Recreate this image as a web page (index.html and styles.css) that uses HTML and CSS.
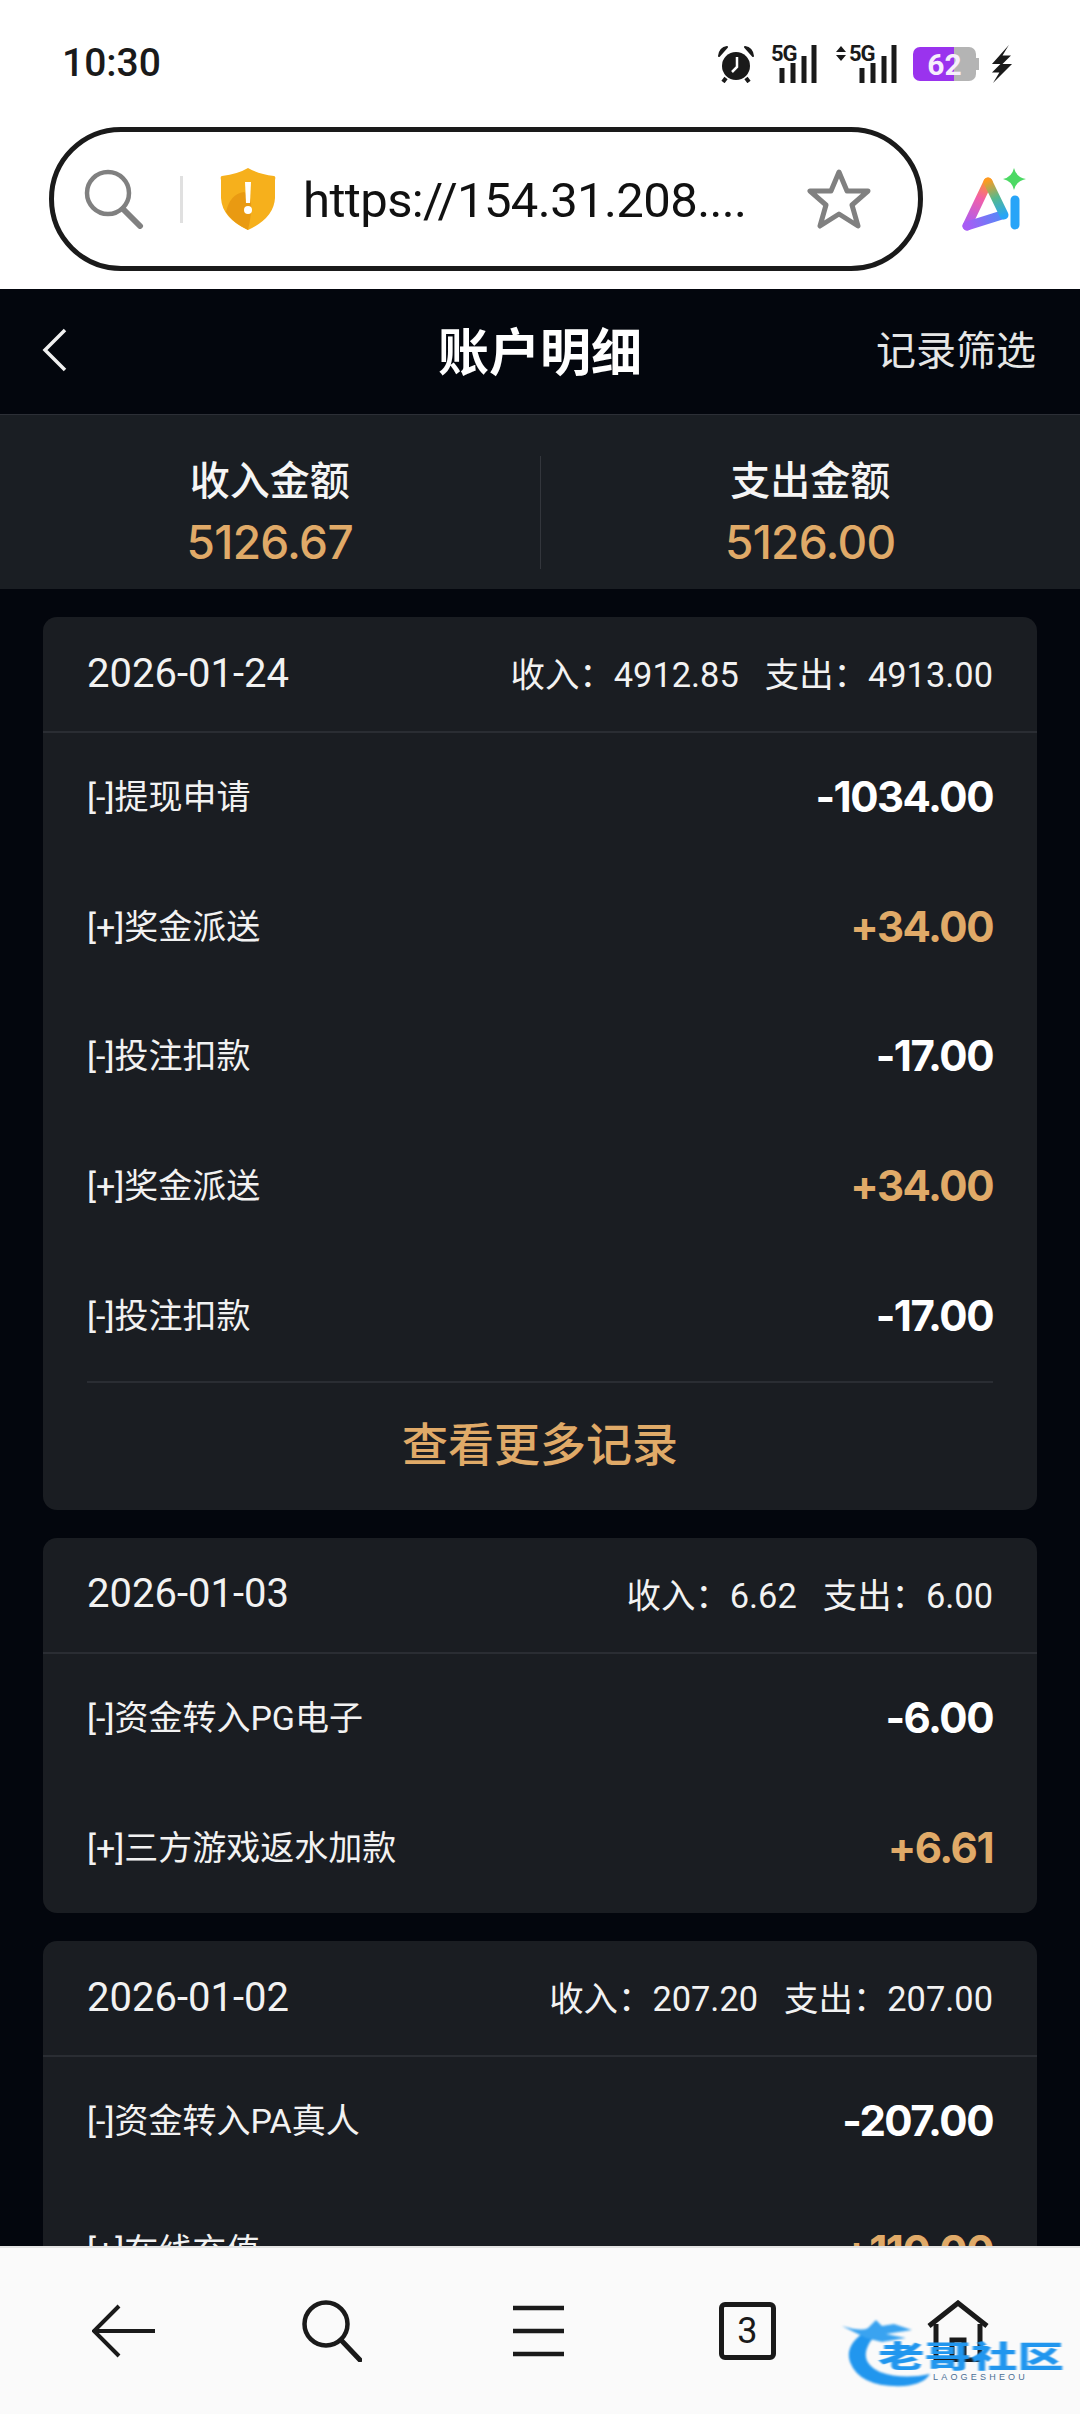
FILE: index.html
```html
<!DOCTYPE html>
<html lang="en">
<head>
    <meta charset="utf-8">
    <title>账户明细</title>
    <link rel="stylesheet" href="styles.css">
</head>
<body>
<div class="status-bar">
    <span class="status-time">10:30</span>
    <div class="status-icons">
        <svg class="icon-alarm" width="38" height="38" viewBox="0 0 38 38">
            <circle cx="19" cy="21" r="14" fill="#1a1a1a"/>
            <path d="M2 11 Q3 3 10 2 Z M36 11 Q35 3 28 2 Z" fill="#1a1a1a" stroke="#1a1a1a" stroke-width="2" stroke-linejoin="round"/>
            <path d="M9 33 L6 37 M29 33 L32 37" stroke="#1a1a1a" stroke-width="4"/>
            <path d="M20 12 V22 L15 27" fill="none" stroke="#fff" stroke-width="2.5"/>
        </svg>
        <div class="signal signal-first">
            <span class="signal-tag">5G</span>
            <svg width="46" height="38" viewBox="0 0 46 38">
                <path d="M11 38 V23 M22 38 V18 M33 38 V11 M43 38 V0" stroke="#1a1a1a" stroke-width="5"/>
            </svg>
        </div>
        <div class="signal signal-wide">
            <svg class="signal-arrows" width="10" height="15" viewBox="0 0 10 15">
                <path d="M0 6 L5 0 L10 6 Z M0 9 L5 15 L10 9 Z" fill="#1a1a1a"/>
            </svg>
            <span class="signal-tag">5G</span>
            <svg width="46" height="38" viewBox="0 0 46 38">
                <path d="M11 38 V23 M22 38 V18 M33 38 V11 M43 38 V0" stroke="#1a1a1a" stroke-width="5"/>
            </svg>
        </div>
        <div class="battery">
            <div class="battery-body"><span class="battery-level">62</span></div>
            <div class="battery-nub"></div>
        </div>
        <svg class="icon-bolt" width="22" height="38" viewBox="2 0 19 36">
            <path d="M18 0 L2 18 L10 18 L2 26 L9 26 L3 36 L21 18 L12 18 L20 10 L12 10 Z" fill="#1a1a1a"/>
        </svg>
    </div>
</div>

<div class="browser-bar">
    <div class="address-pill">
        <svg width="60" height="60" viewBox="0 0 60 60">
            <circle cx="24" cy="24" r="21" fill="none" stroke="#808080" stroke-width="4.5"/>
            <path d="M39 40 L56 57" stroke="#808080" stroke-width="6" stroke-linecap="round"/>
        </svg>
        <div class="address-divider"></div>
        <svg width="56" height="62" viewBox="0 0 56 62">
            <path d="M28 0 Q38 6 54 8 Q56 8 55 12 L55 30 Q54 50 28 62 Q2 50 1 30 L1 12 Q0 8 2 8 Q18 6 28 0 Z" fill="#f6b01c"/>
            <path d="M6 44 Q10 26 24 24 Q36 28 28 62 Q12 54 6 44 Z" fill="#e99a12"/>
            <path d="M25 14 H31 L30 35 H26 Z" fill="#fff"/>
            <circle cx="28" cy="42" r="4" fill="#fff"/>
        </svg>
        <span class="address-url">https://154.31.208....</span>
        <svg class="address-star" width="64" height="60" viewBox="0 0 64 60">
            <path d="M32 3 L40 22 L61 22 L45 36 L51 57 L32 45 L13 57 L19 36 L3 22 L24 22 Z" fill="none" stroke="#808080" stroke-width="5" stroke-linejoin="round"/>
        </svg>
    </div>
    <svg class="ai-logo" width="66" height="64" viewBox="0 0 66 64">
        <defs>
            <linearGradient id="ai-left" gradientUnits="userSpaceOnUse" x1="26" y1="12" x2="6" y2="58">
                <stop offset="0" stop-color="#ff9a1f"/>
                <stop offset="0.4" stop-color="#f25fa8"/>
                <stop offset="1" stop-color="#a85cf5"/>
            </linearGradient>
            <linearGradient id="ai-right" gradientUnits="userSpaceOnUse" x1="26" y1="12" x2="42" y2="48">
                <stop offset="0" stop-color="#ff9a1f"/>
                <stop offset="0.5" stop-color="#55b98e"/>
                <stop offset="1" stop-color="#27a4f8"/>
            </linearGradient>
            <linearGradient id="ai-base" gradientUnits="userSpaceOnUse" x1="5" y1="58" x2="42" y2="46">
                <stop offset="0" stop-color="#a85cf5"/>
                <stop offset="1" stop-color="#4c8cf8"/>
            </linearGradient>
        </defs>
        <path d="M5 58 L26 14" fill="none" stroke="url(#ai-left)" stroke-width="9" stroke-linecap="round"/>
        <path d="M5 58 L40 47" fill="none" stroke="url(#ai-base)" stroke-width="9" stroke-linecap="round"/>
        <path d="M26 14 L42 47" fill="none" stroke="url(#ai-right)" stroke-width="9" stroke-linecap="round"/>
        <path d="M53 32 V57" fill="none" stroke="#27a4f8" stroke-width="9" stroke-linecap="round"/>
        <path d="M52 0 Q54 9 64 11 Q54 13 52 22 Q50 13 41 11 Q50 9 52 0 Z" fill="#4cd964"/>
    </svg>
</div>

<div class="page-header">
    <svg width="26" height="44" viewBox="0 0 26 44">
        <path d="M23 2 L3 22 L23 42" fill="none" stroke="#f0f0f0" stroke-width="3.5"/>
    </svg>
    <h1 class="page-title">账户明细</h1>
    <span class="page-filter">记录筛选</span>
</div>

<div class="summary">
    <div class="summary-item">
        <span class="summary-label">收入金额</span>
        <span class="summary-value">5126.67</span>
    </div>
    <div class="summary-divider"></div>
    <div class="summary-item">
        <span class="summary-label">支出金额</span>
        <span class="summary-value">5126.00</span>
    </div>
</div>

<div class="day-list">
    <section class="day-card">
        <div class="day-head">
            <span class="day-date">2026-01-24</span>
            <div class="day-totals"><span>收入：4912.85</span><span>支出：4913.00</span></div>
        </div>
        <div class="record"><span class="record-name">[-]提现申请</span><span class="record-amount">-1034.00</span></div>
        <div class="record"><span class="record-name">[+]奖金派送</span><span class="record-amount gold">+34.00</span></div>
        <div class="record"><span class="record-name">[-]投注扣款</span><span class="record-amount">-17.00</span></div>
        <div class="record"><span class="record-name">[+]奖金派送</span><span class="record-amount gold">+34.00</span></div>
        <div class="record"><span class="record-name">[-]投注扣款</span><span class="record-amount">-17.00</span></div>
        <div class="more-row">查看更多记录</div>
    </section>

    <section class="day-card">
        <div class="day-head">
            <span class="day-date">2026-01-03</span>
            <div class="day-totals"><span>收入：6.62</span><span>支出：6.00</span></div>
        </div>
        <div class="record"><span class="record-name">[-]资金转入PG电子</span><span class="record-amount">-6.00</span></div>
        <div class="record"><span class="record-name">[+]三方游戏返水加款</span><span class="record-amount gold">+6.61</span></div>
    </section>

    <section class="day-card">
        <div class="day-head">
            <span class="day-date">2026-01-02</span>
            <div class="day-totals"><span>收入：207.20</span><span>支出：207.00</span></div>
        </div>
        <div class="record"><span class="record-name">[-]资金转入PA真人</span><span class="record-amount">-207.00</span></div>
        <div class="record"><span class="record-name">[+]在线充值</span><span class="record-amount gold">+110.00</span></div>
    </section>
</div>

<nav class="bottom-bar">
    <svg class="nav-back" width="64" height="54" viewBox="0 0 64 54">
        <path d="M27 2 L2 27 L27 52 M2 27 H63" fill="none" stroke="#1a1a1a" stroke-width="4"/>
    </svg>
    <svg width="60" height="62" viewBox="0 0 60 62">
        <circle cx="24" cy="24" r="21.5" fill="none" stroke="#1a1a1a" stroke-width="4.5"/>
        <path d="M39 40 L58 60" stroke="#1a1a1a" stroke-width="5" stroke-linecap="round"/>
    </svg>
    <svg width="51" height="52" viewBox="0 0 51 52">
        <path d="M0 3 H51 M0 26 H51 M0 49 H51" stroke="#1a1a1a" stroke-width="4.5"/>
    </svg>
    <div class="tab-count">3</div>
    <svg width="64" height="62" viewBox="0 0 64 62">
        <path d="M3 26 L32 3 L61 26" fill="none" stroke="#1a1a1a" stroke-width="5"/>
        <path d="M10 24 V60 H54 V24 M26 60 V40 H38 V60" fill="none" stroke="#1a1a1a" stroke-width="5"/>
    </svg>
    <div class="watermark">
        <svg class="watermark-dragon" width="100" height="70" viewBox="0 0 100 70">
            <path d="M26 10 Q2 24 8 42 Q18 68 62 66 Q82 64 88 54 Q60 60 38 52 Q16 42 28 22 Q32 16 38 12 Z" fill="#2196ee"/>
            <path d="M0 6 Q20 12 26 8 L34 0 L40 6 L52 4 L70 10 L44 14 L64 18 L40 22 L24 18 Z" fill="#3aa3f0"/>
        </svg>
        <span class="watermark-name">老哥社区</span>
        <span class="watermark-latin">LAOGESHEOU</span>
    </div>
</nav>
</body>
</html>
```

FILE: styles.css
```css
* {
    box-sizing: border-box;
}

body {
    margin: 0;
    height: 2414px;
    overflow: hidden;
    background: #03060d;
    font-family: Inter, "Noto Sans CJK SC", sans-serif;
    color: #f2f2f2;
}

svg {
    display: block;
    flex-shrink: 0;
}

.status-bar {
    height: 127px;
    background: #fff;
    display: flex;
    justify-content: space-between;
    align-items: flex-start;
    padding: 45px 67px 0 62px;
    color: #1a1a1a;
}

.status-time {
    font-family: Roboto, sans-serif;
    font-size: 39px;
    font-weight: 500;
    line-height: 36px;
}

.status-icons {
    display: flex;
    align-items: center;
    gap: 16px;
}

.signal {
    position: relative;
    width: 46px;
}

.signal-first {
    margin-right: 3px;
}

.signal-wide {
    width: 61px;
    padding-left: 15px;
}

.signal-arrows {
    position: absolute;
    left: 0;
    top: 1px;
}

.signal-tag {
    position: absolute;
    top: -2px;
    font-family: Roboto, sans-serif;
    font-size: 22px;
    font-weight: 700;
    line-height: 22px;
    letter-spacing: -1px;
}

.signal-wide .signal-tag {
    left: 13px;
}

.battery {
    display: flex;
    align-items: center;
    width: 66px;
}

.battery-body {
    width: 63px;
    height: 34px;
    border-radius: 7px;
    background: linear-gradient(90deg, #9a33ee 0 65%, #b4b4b4 65% 100%);
    display: flex;
    align-items: center;
    justify-content: center;
}

.battery-level {
    font-family: Roboto, sans-serif;
    font-size: 30px;
    font-weight: 700;
    color: #f6eefc;
}

.battery-nub {
    width: 3px;
    height: 12px;
    background: #b4b4b4;
}

.icon-bolt {
    margin-left: -4px;
}

.browser-bar {
    height: 162px;
    background: #fff;
    display: flex;
    align-items: flex-start;
    padding-left: 49px;
}

.address-pill {
    width: 874px;
    height: 144px;
    border: 5px solid #1a1a1a;
    border-radius: 72px;
    display: flex;
    align-items: center;
    padding-left: 30px;
    color: #111;
}

.address-divider {
    width: 3px;
    height: 47px;
    margin: 0 37px 0 36px;
    background: #e0e0e0;
}

.address-url {
    margin-left: 27px;
    padding-top: 2px;
    font-family: Roboto, sans-serif;
    font-size: 49px;
    letter-spacing: -0.6px;
    white-space: nowrap;
}

.address-star {
    margin-left: auto;
    margin-right: 47px;
}

.ai-logo {
    margin: 41px 0 0 39px;
}

.page-header {
    height: 125px;
    display: flex;
    align-items: center;
    justify-content: space-between;
    padding: 0 44px 3px 42px;
    position: relative;
    background: #03060d;
}

.page-title {
    margin: 0;
    padding-bottom: 3px;
    position: absolute;
    left: 0;
    right: 0;
    text-align: center;
    font-size: 51px;
    font-weight: 700;
    color: #fff;
}

.page-filter {
    padding-bottom: 4px;
    font-size: 40px;
    color: #e6e6e6;
}

.summary {
    height: 175px;
    display: flex;
    align-items: center;
    padding-top: 20px;
    background: #1a1e23;
    border-top: 1px solid #2c2f36;
}

.summary-item {
    flex: 1;
    display: flex;
    flex-direction: column;
    align-items: center;
}

.summary-label {
    font-size: 40px;
    font-weight: 500;
    line-height: 60px;
    color: #f5f5f5;
}

.summary-value {
    font-size: 46px;
    font-weight: 500;
    line-height: 62px;
    letter-spacing: -0.7px;
    color: #e0aa68;
}

.summary-divider {
    width: 1px;
    height: 113px;
    background: #33363c;
}

.day-list {
    display: flex;
    flex-direction: column;
    gap: 28px;
    padding: 28px 43px 0 43px;
}

.day-card {
    background: #1a1d22;
    border-radius: 14px;
    flex-shrink: 0;
}

.day-head {
    height: 116px;
    display: flex;
    align-items: center;
    justify-content: space-between;
    padding: 0 44px;
    border-bottom: 2px solid #2a2d33;
    font-family: Roboto, "Noto Sans CJK SC", sans-serif;
}

.day-date {
    padding-bottom: 2px;
    font-size: 40px;
}

.day-totals {
    display: flex;
    gap: 26px;
    padding-bottom: 4px;
    font-size: 34.4px;
}

.record {
    height: 129.6px;
    display: flex;
    align-items: center;
    justify-content: space-between;
    padding: 0 44px;
}

.record-name {
    padding-bottom: 6px;
    font-family: Roboto, "Noto Sans CJK SC", sans-serif;
    font-size: 34px;
}

.record-amount {
    padding-bottom: 2px;
    font-size: 42px;
    font-weight: 700;
    letter-spacing: -1.5px;
    color: #fff;
}

.record-amount.gold {
    color: #e0aa68;
}

.more-row {
    height: 129px;
    margin: 0 44px;
    padding-bottom: 10px;
    display: flex;
    align-items: center;
    justify-content: center;
    border-top: 2px solid #2a2d33;
    font-size: 46px;
    font-weight: 500;
    color: #e0aa68;
}

.bottom-bar {
    position: fixed;
    left: 0;
    right: 0;
    bottom: 0;
    height: 168px;
    display: flex;
    align-items: center;
    justify-content: space-between;
    padding: 0 90px 0 92px;
    background: #fafafa;
    border-top: 2px solid #e4e4e4;
}

.nav-back {
    margin-right: -4px;
}

.tab-count {
    width: 57px;
    height: 58px;
    margin-left: 5px;
    border: 5px solid #1a1a1a;
    border-radius: 6px;
    display: flex;
    align-items: center;
    justify-content: center;
    font-family: Roboto, sans-serif;
    font-size: 36px;
    color: #1a1a1a;
}

/* watermark stamped over the home button */
.watermark {
    position: absolute;
    left: 842px;
    top: 72px;
    width: 224px;
    height: 70px;
}

.watermark-dragon {
    position: absolute;
    left: 0;
    top: 0;
    filter: blur(0.8px);
}

.watermark-name {
    position: absolute;
    left: 36px;
    top: 19px;
    font-size: 30px;
    line-height: 34px;
    font-weight: 900;
    white-space: nowrap;
    color: #2196ee;
    transform: scaleX(1.55);
    transform-origin: left top;
    filter: blur(0.7px);
}

.watermark-latin {
    position: absolute;
    left: 91px;
    top: 52px;
    font-family: "Liberation Sans", sans-serif;
    font-size: 9px;
    letter-spacing: 3.2px;
    color: #4a6f96;
}
```
